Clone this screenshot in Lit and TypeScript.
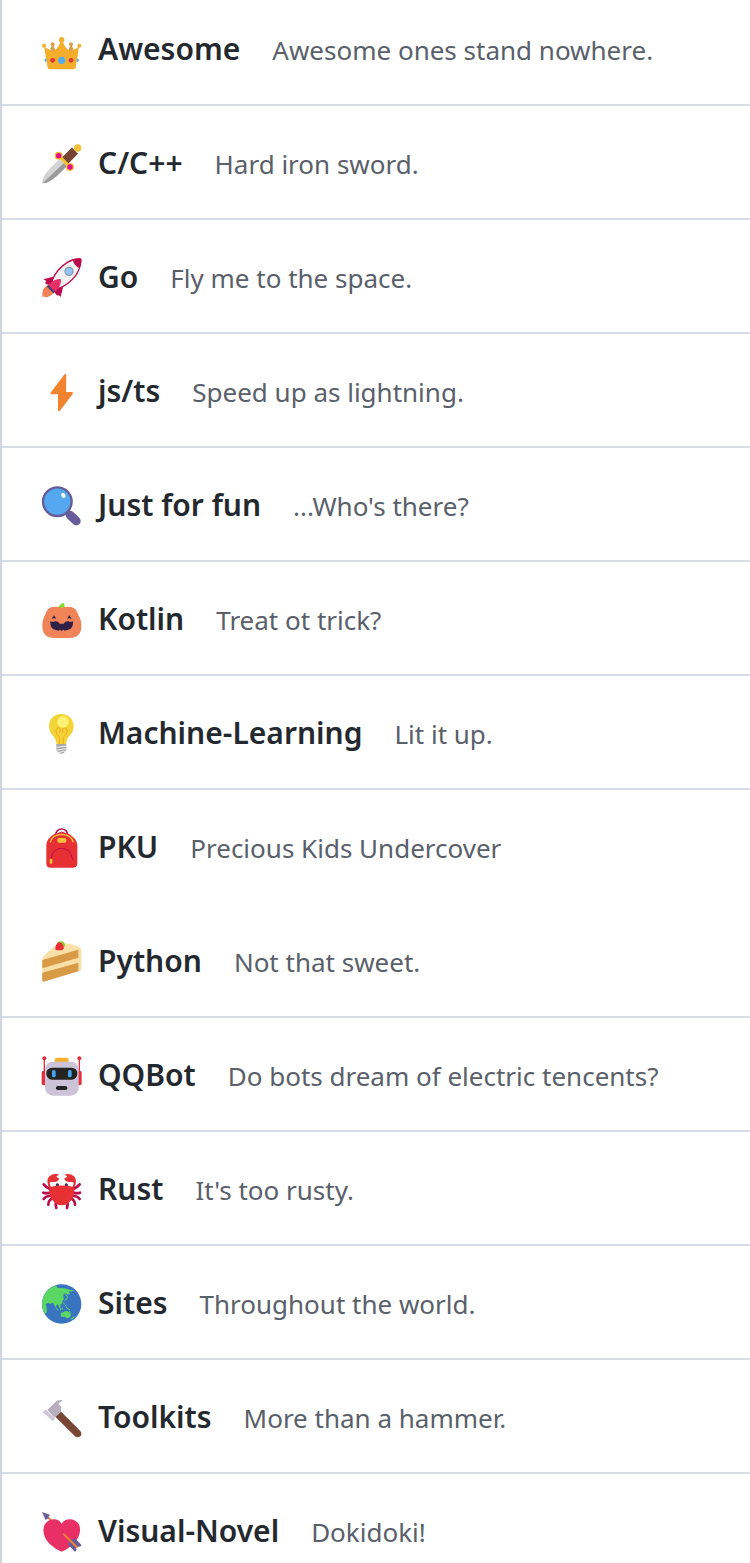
import { LitElement, html, svg, css, type SVGTemplateResult } from "lit";
import { customElement, property } from "lit/decorators.js";

// Every icon is drawn on a 120 x 120 canvas.
const icons: Record<string, SVGTemplateResult> = {
  crown: svg`
    <path fill="#f4ae2b" d="M6 49Q16 59 34 62Q50 56 56 32H62Q68 56 84 62Q102 59 111 49Q107 80 101 113Q99 118 94 118H24Q19 118 17 113Q11 80 6 49Z"/>
    <path fill="#d79e4e" d="M29 48H35Q38 54 39 62Q35 66 29 62L24 56Q28 53 29 48ZM84 48H90Q91 53 95 56L90 62Q84 66 80 62Q81 54 84 48Z"/>
    <g fill="#d99e48"><circle cx="32" cy="43" r="6"/><circle cx="87" cy="43" r="6"/></g>
    <g fill="#f4ae2b"><circle cx="59" cy="29" r="8"/><circle cx="6" cy="47" r="6"/><circle cx="112" cy="47" r="6"/></g>
    <circle cx="59" cy="91" r="11" fill="#55acee"/>
    <g fill="#e5303a"><circle cx="32" cy="91" r="7"/><circle cx="87" cy="91" r="7"/></g>
    <path fill="#55acee" d="M11 85Q7 88 7 91Q8 96 13 97Q17 91 11 85ZM107 85Q111 88 111 91Q110 96 105 97Q101 91 107 85Z"/>`,
  dagger: svg`
    <path fill="#d4d4d4" d="M1 118L2 106Q9 87 23 74L53 44L66 56Z"/>
    <path fill="#9b9b9b" d="M1 118L66 56L75 67L45 96Q30 110 13 117Z"/>
    <path stroke="#774433" stroke-width="26" d="M69 50L99 20"/>
    <path stroke="#f0c036" stroke-width="9" d="M50 35L84 69"/>
    <circle cx="107" cy="12" r="11" fill="#f0c036"/>
    <g fill="#f0c036"><circle cx="50" cy="35" r="12"/><circle cx="84" cy="69" r="12"/></g>
    <g fill="#e6088e"><circle cx="50" cy="35" r="8"/><circle cx="84" cy="69" r="8"/></g>`,
  rocket: svg`
    <path fill="#f08358" d="M24 80Q2 84 1 105V117Q5 114 9 116Q12 119 18 116Q34 112 38 97Z"/>
    <path fill="#bd0a4d" d="M45 53L4 64Q9 67 13 69Q8 73 11 78L34 84ZM66 75L56 117L50 111Q46 115 42 109L36 101L36 86Z"/>
    <path fill="#f2f2f2" stroke="#bd0a4d" stroke-width="4" d="M30 68Q43 34 76 13Q94 2 114 3Q118 4 116 12Q114 34 101 53Q79 81 50 91Z"/>
    <path fill="#bd0a4d" d="M92 7Q105 0 115 1Q119 3 118 12Q117 22 113 31Q98 25 92 7Z"/>
    <path stroke="#4a3f73" stroke-width="8" d="M17 83L37 103"/>
    <path fill="#e93066" d="M22 78Q36 63 56 63Q59 73 52 86Q47 96 39 101L20 82Z"/>
    <circle cx="81" cy="40" r="12" fill="#8ec8fa" stroke="#8d99a5" stroke-width="4"/>`,
  bolt: svg`
    <path fill="#f28430" d="M68 6Q72 5 73 10L72 60H90Q95 61 92 66L54 116Q49 121 48 114L48 67H28Q23 66 26 62Z"/>`,
  lens: svg`
    <path stroke="#675c99" stroke-width="26" stroke-linecap="round" d="M84 87L103 105"/>
    <path stroke="#675c99" stroke-width="8" d="M73 73L88 88"/>
    <circle cx="46" cy="47" r="43" fill="#53a8ef" stroke="#675c99" stroke-width="7"/>
    <ellipse cx="64" cy="28" rx="6" ry="8" fill="#fff" transform="rotate(-28 64 28)"/>`,
  pumpkin: svg`
    <path fill="#8edc2b" d="M47 26Q52 11 66 9Q69 17 67 28Z"/>
    <path fill="#f08358" d="M59 23Q72 19 88 21Q103 24 109 45Q119 60 118 82Q116 114 82 114H37Q3 114 1 82Q0 61 9 45Q15 24 30 21Q48 19 59 23Z"/>
    <path fill="#2f2047" d="M29 57L36 46Q39 50 42 56Q35 53 29 57ZM89 57L82 46Q79 50 76 56Q83 53 89 57ZM25 64Q33 67 39 64Q48 63 53 71H65Q70 63 79 64Q87 67 93 64Q94 80 85 87L76 90L68 92L64 89L59 93L54 89L50 92L42 90L33 87Q24 80 25 64Z"/>`,
  bulb: svg`
    <path fill="#f3d438" d="M58 0C80 0 95 16 95 37C95 65 73 64 73 91H43C43 64 21 65 21 37C21 16 36 0 58 0Z"/>
    <path fill="none" stroke="#f5a623" stroke-width="3" d="M53 90V73Q53 67 45 61Q37 49 46 42Q57 37 54 56M64 90V73Q64 67 72 61Q80 49 71 42Q60 37 63 56"/>
    <circle cx="63" cy="24" r="17" fill="#fff176"/>
    <path fill="#a9a9a9" d="M43 90H73V108L65 117Q58 121 51 117L43 108Z"/>
    <path stroke="#eee" stroke-width="3" d="M43 100L73 96M43 109L73 104M48 116L69 111"/>`,
  backpack: svg`
    <path fill="none" stroke="#bd0a4d" stroke-width="5" d="M41 19Q44 3 59 3Q74 3 77 19"/>
    <path fill="none" stroke="#bd0a4d" stroke-width="3" d="M49 16Q59 8 69 16"/>
    <path fill="#e63034" d="M13 51Q14 31 37 18Q59 9 81 18Q104 31 106 51V107Q105 119 92 119H27Q13 119 13 107Z"/>
    <path fill="none" stroke="#f5c33a" stroke-width="4" d="M25 43Q29 21 59 19Q90 21 94 43"/>
    <rect x="46" y="30" width="27" height="14" rx="5" fill="#f5c33a"/>
    <path fill="none" stroke="#bd0a4d" stroke-width="3" d="M27 91Q33 61 59 61Q86 61 92 95"/>
    <rect x="23" y="92" width="8" height="15" rx="3" fill="#f5c33a"/>`,
  cake: svg`
    <path fill="#f9dfa8" d="M1 48Q15 28 49 5Q83 1 111 15Q118 18 118 23V80Q118 86 111 87L3 116L1 112Z"/>
    <path fill="#d99a45" d="M1 54L109 23V47L1 79ZM1 92L109 62V88L5 119Q1 119 1 116Z"/>
    <path fill="#8ed12f" d="M46 2Q51-3 60-2Q70 2 69 13L61 17Z"/>
    <path fill="#e63034" d="M40 19Q41 5 51 1Q61 1 65 14Q68 19 62 24Q46 26 40 23Z"/>`,
  robot: svg`
    <path stroke="#e2303c" stroke-width="4" d="M7 7V60M112 7V60"/>
    <g fill="#e2303c"><circle cx="7" cy="7" r="6"/><circle cx="112" cy="7" r="6"/><rect x="-1" y="44" width="14" height="44" rx="6"/><rect x="106" y="44" width="13" height="44" rx="6"/></g>
    <rect x="38" y="5" width="42" height="17" rx="7" fill="#f4b02e"/>
    <rect x="9" y="17" width="101" height="102" rx="24" fill="#cdc3d9"/>
    <rect x="13" y="35" width="93" height="36" rx="17" fill="#242424"/>
    <g fill="#42a5ee"><rect x="30" y="42" width="11" height="22" rx="5"/><rect x="78" y="42" width="11" height="22" rx="5"/></g>
    <rect x="42" y="90" width="34" height="12" rx="5" fill="#242424"/>`,
  crab: svg`
    <path fill="none" stroke="#bd0a4d" stroke-width="8" stroke-linecap="round" d="M25 58Q12 52 5 43M23 68Q12 71 4 68M25 78Q12 77 5 87M31 85Q19 91 19 104M44 91Q39 101 43 114M93 58Q106 52 113 43M95 68Q106 71 114 68M93 78Q106 77 113 87M87 85Q99 91 99 104M74 91Q79 101 75 114"/>
    <path fill="none" stroke="#e63034" stroke-width="6" d="M30 58Q17 48 21 31M88 58Q101 48 97 31"/>
    <path fill="#e63034" d="M18 41Q13 29 22 19Q33 9 51 13L43 20L52 26Q45 39 31 35Q23 35 18 41ZM100 41Q105 29 96 19Q85 9 68 13L76 20L66 26Q74 39 87 35Q95 35 100 41Z"/>
    <g fill="#3b2b51"><circle cx="46" cy="45" r="5"/><circle cx="73" cy="45" r="5"/></g>
    <path fill="#e63034" d="M27 50Q59 43 92 50Q98 58 97 68Q95 88 74 103Q59 109 45 103Q24 88 22 68Q21 58 27 50Z"/>`,
  globe: svg`
    <circle cx="59" cy="60" r="59" fill="#3974c0"/>
    <path fill="#5ad763" d="M42 4L47 12L68 13L82 17L96 19L91 22L80 23L85 29L77 33L75 29L65 29L64 38L66 45L61 51L61 58L55 62L56 70L52 72L48 60L44 64L40 70L33 56L23 60L20 56L11 60L14 73L15 84L8 90Q-1 73 0 56Q4 18 42 4Z"/>
    <path fill="none" stroke="#5ad763" stroke-width="3" d="M71 31L76 38L75 44L68 49M65 56L67 61M42 71L48 80M55 72L56 79M69 63L74 67M72 70L84 78"/>
    <path fill="#5ad763" d="M57 87Q65 85 68 82L75 81L79 84L84 81L86 89L86 97Q81 104 74 102L69 98L58 98Q54 93 57 87ZM94 98L98 94L96 101L89 107L86 105ZM59 71L62 71L62 77L59 77Z"/>`,
  hammer: svg`
    <path fill="#784632" d="M40 56L56 40L115 99Q121 108 116 114Q108 121 99 115Z"/>
    <path fill="#b7aec0" d="M44 8Q53 5 61 6L57 12L50 15Q50 23 58 27L56 43L38 59L16 36Z"/>
    <path fill="#cec5d8" d="M12 35L39 62L31 70L25 62L9 48L1 43Z"/>`,
  heart: svg`
    <path stroke="#f28430" stroke-width="6" d="M15 13L31 29"/>
    <path fill="#675c99" d="M0 0L25 9L19 13L21 17L11 24Z"/>
    <path fill="#e93066" d="M59 35C70 16 99 18 110 36C120 55 111 79 93 97Q77 112 59 119Q40 112 24 97C5 79-1 55 9 36C20 18 49 16 59 35Z"/>
    <path fill="#675c99" d="M81 83L100 80L118 98Q117 106 109 104L102 107Q106 115 99 119L79 99Z"/>
    <path stroke="#f28430" stroke-width="6" stroke-linecap="round" d="M66 67L104 105"/>`,
};

interface StarList {
  icon: string;
  name: string;
  note: string;
  joined?: boolean;
}

const lists: StarList[] = [
  { icon: "crown", name: "Awesome", note: "Awesome ones stand nowhere." },
  { icon: "dagger", name: "C/C++", note: "Hard iron sword." },
  { icon: "rocket", name: "Go", note: "Fly me to the space." },
  { icon: "bolt", name: "js/ts", note: "Speed up as lightning." },
  { icon: "lens", name: "Just for fun", note: "...Who's there?" },
  { icon: "pumpkin", name: "Kotlin", note: "Treat ot trick?" },
  { icon: "bulb", name: "Machine-Learning", note: "Lit it up." },
  { icon: "backpack", name: "PKU", note: "Precious Kids Undercover", joined: true },
  { icon: "cake", name: "Python", note: "Not that sweet." },
  { icon: "robot", name: "QQBot", note: "Do bots dream of electric tencents?" },
  { icon: "crab", name: "Rust", note: "It's too rusty." },
  { icon: "globe", name: "Sites", note: "Throughout the world." },
  { icon: "hammer", name: "Toolkits", note: "More than a hammer." },
  { icon: "heart", name: "Visual-Novel", note: "Dokidoki!" },
];

@customElement("list-row")
export class ListRow extends LitElement {
  @property({ attribute: false }) item!: StarList;

  static styles = css`
    :host {
      display: block;
    }
    .row {
      display: flex;
      align-items: center;
      gap: 16px;
      color: #24292f;
      text-decoration: none;
    }
    .icon {
      flex: none;
      width: 40px;
      height: 40px;
      fill: none;
      overflow: visible;
    }
    .text {
      display: flex;
      align-items: baseline;
      gap: 32px;
      min-width: 0;
      padding-bottom: 2px;
      white-space: nowrap;
    }
    .name {
      margin: 0;
      font-size: 30px;
      font-weight: 600;
      line-height: 38px;
    }
    .note {
      color: #5a606a;
      font-size: 26px;
      line-height: 32px;
    }
  `;

  render() {
    const { icon, name, note } = this.item;
    return html`
      <a class="row" href="#">
        <svg class="icon" viewBox="0 0 120 120" aria-hidden="true">${icons[icon]}</svg>
        <span class="text">
          <h3 class="name">${name}</h3>
          <span class="note">${note}</span>
        </span>
      </a>
    `;
  }
}

@customElement("app-root")
export class AppRoot extends LitElement {
  static styles = css`
    :host {
      display: block;
      background: #fff;
      font-family: "Segoe UI", "Noto Sans", "Open Sans", sans-serif;
    }
    .lists {
      margin: 0;
      padding: 0;
      list-style: none;
      border-left: 2px solid #d0d4de;
      overflow: hidden;
    }
    .entry {
      padding: 38px 40px 34px;
      border-bottom: 2px solid #d8dce4;
    }
    .entry:first-child {
      padding-top: 30px;
    }
    .entry:last-child {
      padding-bottom: 11px;
      border-bottom: 0;
    }
    .joined {
      border-bottom-color: transparent;
    }
  `;

  render() {
    return html`
      <ul class="lists">
        ${lists.map(
          (item) => html`
            <li class=${item.joined ? "entry joined" : "entry"}>
              <list-row .item=${item}></list-row>
            </li>
          `,
        )}
      </ul>
    `;
  }
}
